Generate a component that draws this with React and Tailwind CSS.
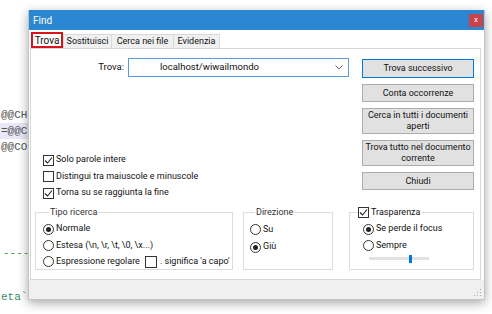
import React from "react";

const Check = ({ checked }) => (
    <span className="w-[11px] h-[11px] border border-[#333] bg-white flex items-center justify-center shrink-0">
        {checked && (
            <svg width="9" height="9" viewBox="0 0 9 9">
                <path d="M1 4.5 L3.5 7 L8 1.5" fill="none" stroke="#222" strokeWidth="1.1" />
            </svg>
        )}
    </span>
);

const Radio = ({ checked }) => (
    <span className="w-[11px] h-[11px] rounded-full border border-[#333] bg-white flex items-center justify-center shrink-0">
        {checked && <span className="w-[5px] h-[5px] rounded-full bg-[#222]" />}
    </span>
);

const Option = ({ box, label, className = "" }) => (
    <div className={"flex items-center gap-[2px] whitespace-nowrap " + className}>
        {box}
        <span>{label}</span>
    </div>
);

const Btn = ({ children, h, focused }) => (
    <div
        className={
            "w-[112px] flex items-center justify-center text-center leading-[11px] bg-[#e1e1e1] border " +
            (focused ? "border-[#0078d7]" : "border-[#adadad]") +
            " " +
            h
        }
    >
        {children}
    </div>
);

const App = () => {
    return (
        <div className="w-[492px] h-[314px] bg-white flex overflow-hidden font-['Roboto',sans-serif] text-[9px] text-[#111]">
            {/* editor behind the dialog */}
            <div className="w-[28px] shrink-0 overflow-hidden whitespace-nowrap font-['Liberation_Mono',monospace] text-[11px] text-[#555] leading-[16px] pt-[107px]">
                <div className="pl-[1px]">@@CH</div>
                <div className="pl-[1px] bg-[#e8e8f8]">=@@C</div>
                <div className="pl-[1px]">@@CO</div>
                <div className="pl-[3px] mt-[90px] text-[#3a9a3a]">----</div>
                <div className="pl-[1px] mt-[28px] text-[#3a8a6a]">eta`</div>
            </div>

            {/* Find dialog */}
            <div className="mt-[10px] w-[457px] h-[290px] shrink-0 flex flex-col bg-white border border-[#c4c4c4] border-t-0 shadow-[0_3px_10px_rgba(0,0,0,0.35)]">
                <div className="h-[20px] bg-[#2b87d1] flex items-center justify-between pl-[4px] pr-[1px] text-white text-[10px]">
                    <span>Find</span>
                    <span className="w-[14px] h-[13px] bg-[#c9444a] flex items-center justify-center text-[8px] leading-none">
                        x
                    </span>
                </div>

                <div className="flex-1 flex flex-col bg-white">
                    {/* tabs */}
                    <div className="flex items-end h-[17px] pl-[2px] mt-[1px]">
                        <div className="h-[16px] w-[32px] border-2 border-[#d4161c] bg-white flex items-center justify-center text-[10px]">
                            Trova
                        </div>
                        <div className="h-[14px] w-[49px] border border-[#d9d9d9] border-b-0 bg-[#f0f0f0] flex items-center justify-center">
                            Sostituisci
                        </div>
                        <div className="h-[14px] w-[62px] border border-l-0 border-[#d9d9d9] border-b-0 bg-[#f0f0f0] flex items-center justify-center">
                            Cerca nei file
                        </div>
                        <div className="h-[14px] w-[46px] border border-l-0 border-[#d9d9d9] border-b-0 bg-[#f0f0f0] flex items-center justify-center">
                            Evidenzia
                        </div>
                    </div>

                    {/* panel */}
                    <div className="flex-1 ml-[1px] mr-[3px] border border-[#d9d9d9] flex flex-col">
                        <div className="h-[157px] flex">
                            <div className="w-[323px] flex flex-col">
                                <div className="flex items-center mt-[9px] h-[19px] text-[9.5px]">
                                    <span className="w-[97px] text-right pr-[4px]">Trova:</span>
                                    <div className="w-[221px] h-[19px] border border-[#5d9bd6] bg-white flex items-center justify-between pl-[31px] pr-[5px]">
                                        <span>localhost/wiwailmondo</span>
                                        <svg width="8" height="5" viewBox="0 0 8 5">
                                            <path d="M0.5 0.5 L4 4 L7.5 0.5" fill="none" stroke="#666" strokeWidth="1" />
                                        </svg>
                                    </div>
                                </div>
                                <div className="mt-[75px] pl-[12px] flex flex-col">
                                    <Option className="h-[16px]" box={<Check checked />} label="Solo parole intere" />
                                    <Option className="h-[17px]" box={<Check />} label="Distingui tra maiuscole e minuscole" />
                                    <Option className="h-[16px]" box={<Check checked />} label="Torna su se raggiunta la fine" />
                                </div>
                            </div>
                            <div className="ml-[8px] pt-[10px] flex flex-col gap-[6px]">
                                <Btn h="h-[19px]" focused>Trova successivo</Btn>
                                <Btn h="h-[18px]">Conta occorrenze</Btn>
                                <Btn h="h-[26px]">Cerca in tutti i documenti aperti</Btn>
                                <Btn h="h-[26px]">Trova tutto nel documento corrente</Btn>
                                <Btn h="h-[18px]">Chiudi</Btn>
                            </div>
                        </div>

                        {/* group boxes */}
                        <div className="flex items-start">
                            <fieldset className="ml-[4px] w-[198px] h-[64px] border border-[#dcdcdc] pl-[7px]">
                                <legend className="ml-[6px] px-[1px] text-[#333]">Tipo ricerca</legend>
                                <Option className="h-[17px] mt-[1px]" box={<Radio checked />} label="Normale" />
                                <Option className="h-[16px]" box={<Radio />} label="Estesa (\n, \r, \t, \0, \x...)" />
                                <div className="flex items-center h-[16px] whitespace-nowrap">
                                    <Option box={<Radio />} label="Espressione regolare" />
                                    <span className="ml-[5px] w-[12px] h-[12px] border border-[#333] bg-white shrink-0" />
                                    <span className="ml-[3px]">. significa 'a capo'</span>
                                </div>
                            </fieldset>
                            <fieldset className="ml-[10px] w-[90px] h-[64px] border border-[#dcdcdc] pl-[6px]">
                                <legend className="ml-[5px] px-[1px] text-[#333]">Direzione</legend>
                                <Option className="h-[18px] mt-[1px]" box={<Radio />} label="Su" />
                                <Option className="h-[17px]" box={<Radio checked />} label="Giù" />
                            </fieldset>
                            <fieldset className="ml-[16px] w-[125px] h-[64px] border border-[#dcdcdc] pl-[13px]">
                                <legend className="-ml-[5px] pr-[2px] flex items-center gap-[2px]">
                                    <Check checked />
                                    <span>Trasparenza</span>
                                </legend>
                                <Option className="h-[17px] mt-[1px]" box={<Radio checked />} label="Se perde il focus" />
                                <Option className="h-[16px]" box={<Radio />} label="Sempre" />
                                <div className="ml-[6px] w-[60px] h-[10px] flex items-center relative">
                                    <div className="w-full h-[3px] bg-[#e2e2e2]" />
                                    <div className="absolute left-[40px] w-[3px] h-[8px] bg-[#0078d7]" />
                                </div>
                            </fieldset>
                        </div>
                    </div>

                    {/* bottom strip */}
                    <div className="h-[19px] bg-[#f0f0f0] flex items-end justify-end pr-[2px] pb-[2px]">
                        <svg width="8" height="8" viewBox="0 0 8 8">
                            <rect x="6" y="0" width="1" height="1" fill="#aaa" />
                            <rect x="3" y="3" width="1" height="1" fill="#aaa" />
                            <rect x="6" y="3" width="1" height="1" fill="#aaa" />
                            <rect x="0" y="6" width="1" height="1" fill="#aaa" />
                            <rect x="3" y="6" width="1" height="1" fill="#aaa" />
                            <rect x="6" y="6" width="1" height="1" fill="#aaa" />
                        </svg>
                    </div>
                </div>
            </div>
        </div>
    );
};

export default App;
